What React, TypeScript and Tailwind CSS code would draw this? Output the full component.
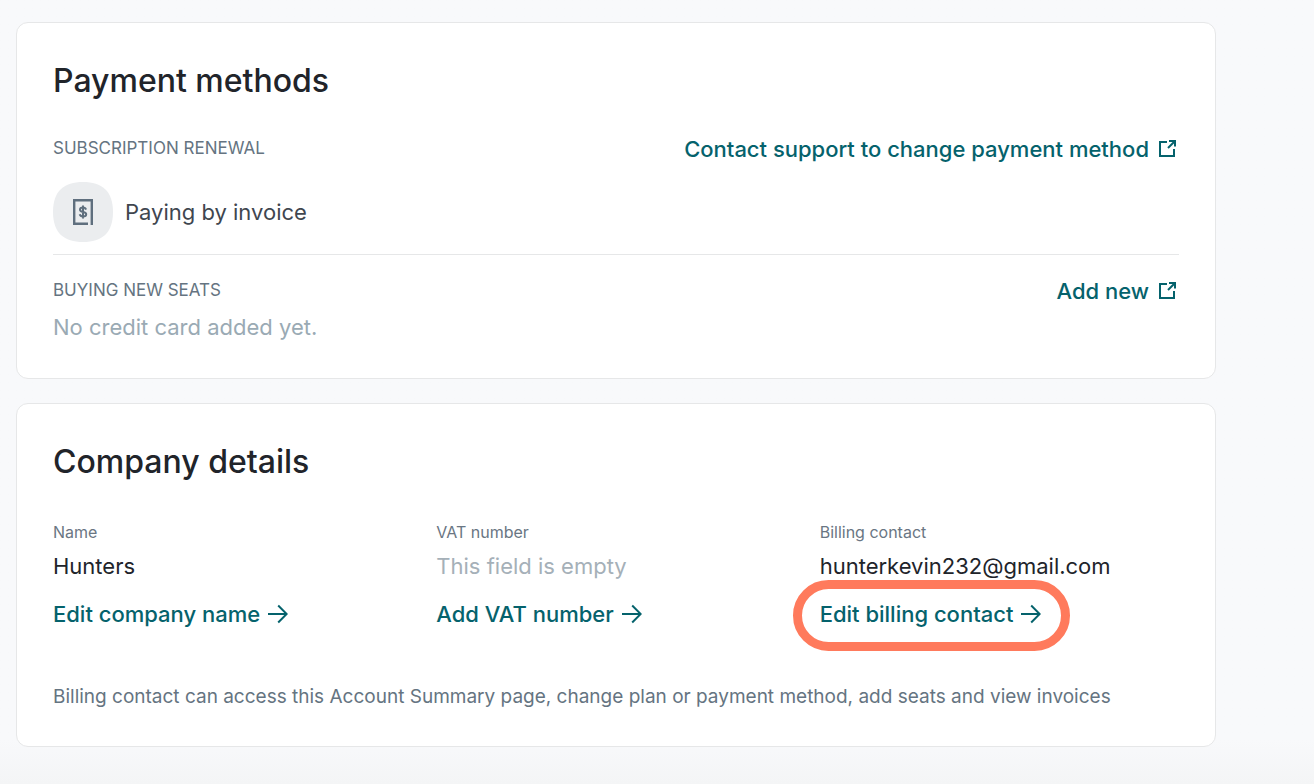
import type { ReactNode } from "react";

function ExternalIcon() {
  return (
    <svg
      className="mr-0.5 h-5 w-5 shrink-0"
      viewBox="0 0 20 20"
      fill="none"
      stroke="currentColor"
      strokeWidth="2"
      aria-hidden="true"
    >
      <path d="M10 3H3v14h14v-7" />
      <path d="M11 9l6.500-6.500" />
      <path d="M12 2h6v5.500" />
    </svg>
  );
}

function ArrowIcon() {
  return (
    <svg
      className="h-5 w-5 shrink-0"
      viewBox="0 0 20 20"
      fill="none"
      stroke="currentColor"
      strokeWidth="2"
      aria-hidden="true"
    >
      <path d="M0 10h18" />
      <path d="m10.200 1.500 8.500 8.500-8.500 8.500" />
    </svg>
  );
}

function InvoiceIcon() {
  return (
    <svg className="h-15 w-15 shrink-0" viewBox="0 0 60 60" fill="none" aria-hidden="true">
      <path
        d="M30 0C49 0 60 9 60 30S49 60 30 60 0 51 0 30 11 0 30 0Z"
        fill="#ebedef"
      />
      <path d="M35 41.800H21.200V18.200h17.600V43" stroke="#5f6f7e" strokeWidth="2.4" />
      <path
        d="M33 27.600c-.4-1.300-1.500-2-3-2-1.800 0-3 .8-3 2.100 0 3.200 6.200 1.300 6.200 4.500 0 1.400-1.300 2.200-3.200 2.200-1.700 0-2.900-.8-3.300-2.200M30 23.600v12.800"
        stroke="#5f6f7e"
        strokeWidth="2"
      />
    </svg>
  );
}

function Card({ title, children }: { title: string; children: ReactNode }) {
  return (
    <section className="rounded-xl border border-[#e6e7e8] bg-white px-9 pt-9 pb-[35px]">
      <h2 className="text-[32px] leading-[44px] font-medium text-[#21242a]">{title}</h2>
      {children}
    </section>
  );
}

function SectionLabel({ children }: { children: ReactNode }) {
  return <h3 className="text-[17px] leading-[30px] text-[#657481] uppercase">{children}</h3>;
}

function ExternalLink({ children }: { children: ReactNode }) {
  return (
    <a href="#" className="flex items-center gap-2 text-[22px] leading-8 font-medium text-[#05626c]">
      {children}
      <ExternalIcon />
    </a>
  );
}

function Field({
  label,
  value,
  empty = false,
  action,
  highlighted = false,
}: {
  label: string;
  value: string;
  empty?: boolean;
  action: string;
  highlighted?: boolean;
}) {
  return (
    <div>
      <dt className="text-base leading-6 text-[#6a7683]">{label}</dt>
      <dd className={empty ? "mt-1.5 text-[22px] leading-8 text-[#a5b0b8]" : "mt-1.5 text-[22px] leading-8 text-[#21242a]"}>
        {value}
      </dd>
      <dd className="mt-4 flex">
        <a
          href="#"
          className="relative flex items-center gap-2 text-[22px] leading-8 font-medium whitespace-nowrap text-[#05626c]"
        >
          {action}
          <ArrowIcon />
          {highlighted && (
            <span className="pointer-events-none absolute -top-[18px] -right-[29px] -bottom-[21px] -left-[27px] rounded-full border-9 border-[#ff7a5c]" />
          )}
        </a>
      </dd>
    </div>
  );
}

export default function App() {
  return (
    <main className="min-h-screen bg-[#f8f9fb] bg-linear-to-t from-[#f4f5f6] to-[#f8f9fb] to-[44px] px-4 pt-[22px] pb-9 font-['Inter','Liberation_Sans',sans-serif]">
      <div className="flex max-w-[1200px] flex-col gap-6">
        <Card title="Payment methods">
          <div className="mt-[30px] flex items-start justify-between">
            <SectionLabel>Subscription renewal</SectionLabel>
            <ExternalLink>Contact support to change payment method</ExternalLink>
          </div>
          <div className="mt-[17px] flex items-center gap-3 border-b border-[#e6e7e8] pb-3">
            <InvoiceIcon />
            <p className="text-[22px] leading-8 text-[#40464f]">Paying by invoice</p>
          </div>
          <div className="mt-5 flex items-start justify-between">
            <SectionLabel>Buying new seats</SectionLabel>
            <ExternalLink>Add new</ExternalLink>
          </div>
          <p className="mt-1 text-[22px] leading-8 text-[#9aaab4]">No credit card added yet.</p>
        </Card>

        <Card title="Company details">
          <dl className="mt-9 grid grid-cols-3 gap-6">
            <Field label="Name" value="Hunters" action="Edit company name" />
            <Field label="VAT number" value="This field is empty" empty action="Add VAT number" />
            <Field
              label="Billing contact"
              value="hunterkevin232@gmail.com"
              action="Edit billing contact"
              highlighted
            />
          </dl>
          <p className="mt-[53px] text-[19px] leading-7 text-[#657481]">
            Billing contact can access this Account Summary page, change plan or payment method, add seats and view
            invoices
          </p>
        </Card>
      </div>
    </main>
  );
}
